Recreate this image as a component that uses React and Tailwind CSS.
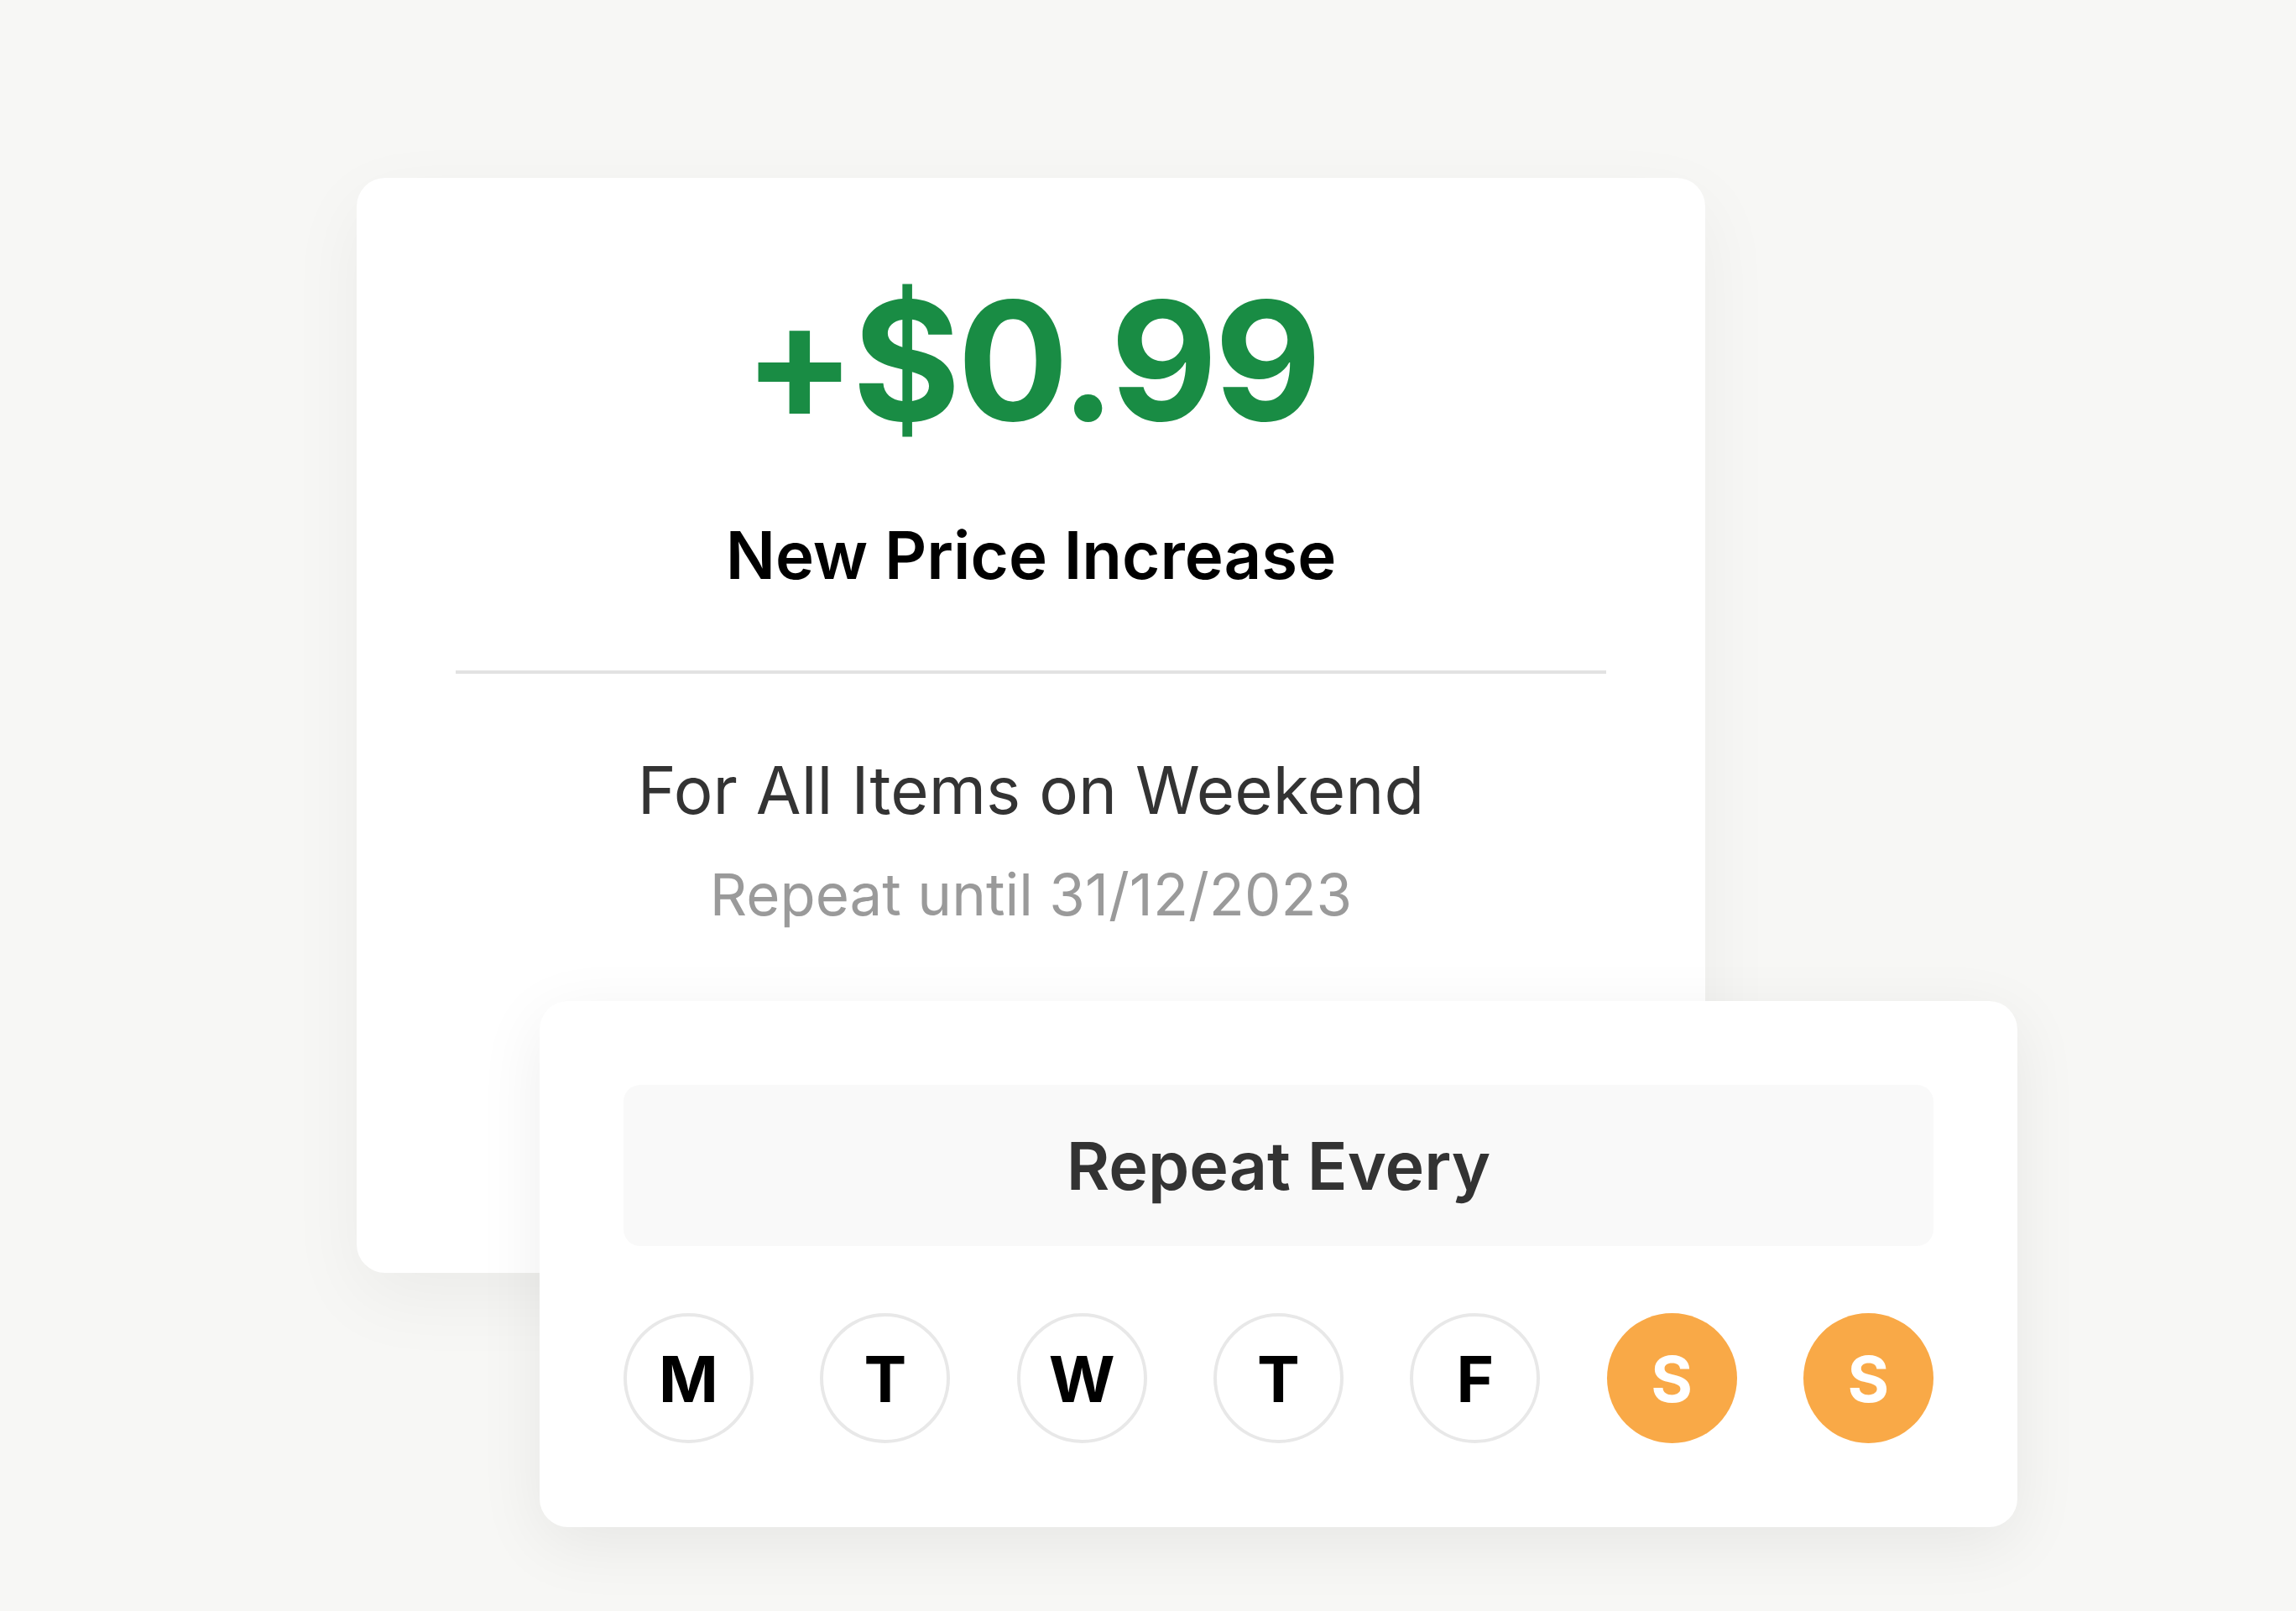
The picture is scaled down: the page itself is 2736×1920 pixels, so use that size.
import React from 'react';

const days = [
  { label: 'M', on: false },
  { label: 'T', on: false },
  { label: 'W', on: false },
  { label: 'T', on: false },
  { label: 'F', on: false },
  { label: 'S', on: true },
  { label: 'S', on: true },
];

function DayCircle({ label, on }) {
  return (
    <div
      className={
        on
          ? 'flex h-[155px] w-[155px] items-center justify-center rounded-full bg-[#f9a947] text-[76px] font-bold leading-none text-white'
          : 'flex h-[155px] w-[155px] items-center justify-center rounded-full border-[4px] border-[#e8e8e8] bg-white text-[76px] font-bold leading-none text-black'
      }
    >
      {label}
    </div>
  );
}

export default function App() {
  return (
    <div
      className="h-[1920px] w-[2736px] overflow-hidden bg-[#f7f7f5] pl-[425px] pt-[212px]"
      style={{ fontFamily: 'Inter, "Noto Sans", sans-serif' }}
    >
      <div className="flex flex-col">
        <div className="flex h-[1305px] w-[1607px] flex-col items-center rounded-[34px] bg-white px-[118px] pt-[119px] shadow-[0_30px_90px_rgba(0,0,0,0.05)]">
          <div className="text-[197px] font-bold leading-none tracking-[-4px] text-[#198c44]">+$0.99</div>
          <div className="mt-[95px] text-[78px] font-semibold leading-none text-black">New Price Increase</div>
          <div className="mt-[98px] h-[4px] w-full bg-[#e2e2e2]" />
          <div className="mt-[100px] text-[78px] leading-none text-[#333333]">For All Items on Weekend</div>
          <div className="mt-[51px] text-[69px] leading-none text-[#9a9a9a]">Repeat until 31/12/2023</div>
        </div>

        <div className="relative -mt-[324px] ml-[218px] flex h-[627px] w-[1761px] flex-col gap-[80px] rounded-[34px] bg-white p-[100px] shadow-[0_20px_80px_rgba(0,0,0,0.07)]">
          <div className="flex h-[194px] w-full items-center justify-center rounded-[20px] bg-[#f9f9f9]">
            <span className="text-[79px] font-semibold leading-none text-[#333333]">Repeat Every</span>
          </div>
          <div className="flex items-center justify-between">
            {days.map((d, i) => (
              <DayCircle key={i} label={d.label} on={d.on} />
            ))}
          </div>
        </div>
      </div>
    </div>
  );
}
